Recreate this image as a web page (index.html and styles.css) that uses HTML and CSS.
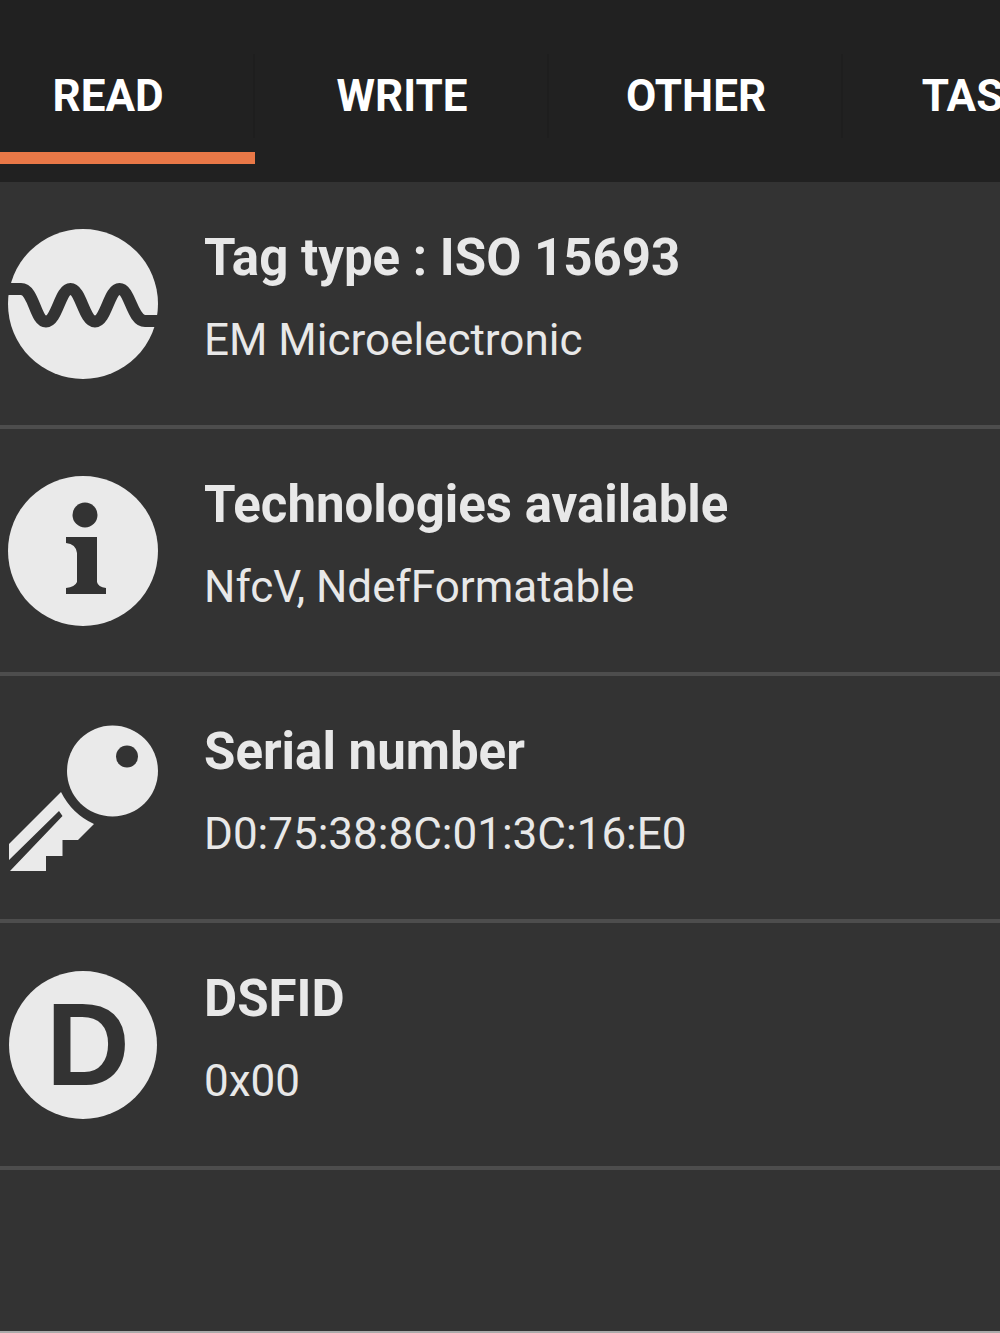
FILE: index.html
```html
<!DOCTYPE html>
<html lang="en">
<head>
  <meta charset="UTF-8">
  <meta name="viewport" content="width=device-width, initial-scale=1">
  <title>NFC Tools</title>
  <link rel="stylesheet" href="styles.css">
</head>
<body>
  <nav class="tabs">
    <button class="tab active">READ</button>
    <button class="tab">WRITE</button>
    <button class="tab">OTHER</button>
    <button class="tab">TASKS</button>
  </nav>

  <main>
    <ul class="list">
      <li class="row">
        <svg class="icon" viewBox="0 0 150 150" aria-hidden="true">
          <circle class="light" cx="75" cy="75" r="75"/>
          <path class="wave" d="M-4 60H13C26 60 27 92.500 38 92.500S52 60 62.500 60S76 92.500 87 92.500S101 60 111.500 60S124 92 137 92H154"/>
        </svg>
        <div class="info">
          <h2>Tag type : ISO 15693</h2>
          <p>EM Microelectronic</p>
        </div>
      </li>

      <li class="row">
        <svg class="icon" viewBox="0 0 150 150" aria-hidden="true">
          <circle class="light" cx="75" cy="75" r="75"/>
          <circle class="dark" cx="77" cy="39" r="12.500"/>
          <path class="dark" d="M58 61H89V106Q90 111 98 112V118H58V112Q67 111 69 106V77Q68 68 58 67Z"/>
        </svg>
        <div class="info">
          <h2>Technologies available</h2>
          <p>NfcV, NdefFormatable</p>
        </div>
      </li>

      <li class="row">
        <svg class="icon" viewBox="0 0 150 150" aria-hidden="true">
          <circle class="light" cx="104.500" cy="48" r="45.500"/>
          <circle class="dark" cx="119" cy="33.500" r="11"/>
          <path class="light" d="M53 69Q64 91 86 101L70 117H54.500V133H38V148H2L54.500 93L51 88L1 137V121Z"/>
        </svg>
        <div class="info">
          <h2>Serial number</h2>
          <p>D0:75:38:8C:01:3C:16:E0</p>
        </div>
      </li>

      <li class="row">
        <svg class="icon" viewBox="0 0 150 150" aria-hidden="true">
          <circle class="light" cx="75" cy="75" r="74"/>
          <text class="letter" x="38" y="115">D</text>
        </svg>
        <div class="info">
          <h2>DSFID</h2>
          <p>0x00</p>
        </div>
      </li>
    </ul>
  </main>
</body>
</html>
```

FILE: styles.css
```css
* {
  box-sizing: border-box;
}

body {
  font-family: Roboto, sans-serif;
  background-color: #333;
  color: #e8e8e8;
  min-height: 100vh;
  margin: 0;
  border-bottom: 2px solid #aaa;
}

/* tab strip, scrolled a little to the left */
.tabs {
  display: flex;
  overflow: hidden;
  background-color: #212121;
  padding: 34px 0 18px;
  margin-left: -39px;
}

.tab {
  flex: 0 0 294px;
  height: 130px;
  padding: 6px 0 0;
  border: none;
  border-bottom: 12px solid transparent;
  background: linear-gradient(#1e1e1e, #1e1e1e) no-repeat right 20px / 2px 84px;
  color: #fff;
  font-family: inherit;
  font-size: 44px;
  font-weight: bold;
  line-height: 52px;
  cursor: pointer;
}

.tab.active {
  border-bottom-color: #e97847;
}

.list {
  list-style: none;
  margin: 0;
  padding: 0;
}

.row {
  display: flex;
  align-items: center;
  gap: 46px;
  min-height: 247px;
  padding: 0 8px;
  border-bottom: 4px solid #4d4d4d;
}

.icon {
  flex: none;
  width: 150px;
  height: 150px;
}

.light {
  fill: #eaeaea;
}

.dark {
  fill: #333;
}

.wave {
  fill: none;
  stroke: #333;
  stroke-width: 12;
}

.letter {
  fill: #333;
  font-family: "Liberation Sans", sans-serif;
  font-size: 116px;
  font-weight: bold;
}

.info {
  padding-bottom: 14px;
}

.info h2 {
  margin: 0 0 26px;
  font-size: 51px;
  font-weight: bold;
  line-height: 60px;
}

.info p {
  margin: 0;
  font-size: 44px;
  line-height: 52px;
}
```
